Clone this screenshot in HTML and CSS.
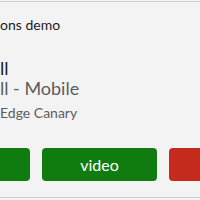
FILE: index.html
```html
<!DOCTYPE html>
<html>
<head>
<meta charset="utf-8">
<link rel="stylesheet" href="styles.css">
</head>
<body>
<div class="frame">
  <div class="title">ons demo</div>
  <div class="heading">ll</div>
  <div class="subheading">ll - Mobile</div>
  <div class="source">Edge Canary</div>
  <div class="actions">
    <button class="btn green"></button>
    <button class="btn green">video</button>
    <button class="btn red"></button>
  </div>
</div>
</body>
</html>
```
FILE: styles.css
```css
html, body {
  margin: 0;
  padding: 0;
  background: #f3f3f3;
  width: 200px;
  height: 200px;
  overflow: hidden;
  font-family: "Lato", "Open Sans", sans-serif;
}
.frame {
  margin-top: 1px;
  height: 195px;
  border-top: 1px solid #d2d2d2;
  border-bottom: 1px solid #cdcdcd;
  background: #f3f3f3;
  box-sizing: content-box;
  overflow: hidden;
}
.title {
  margin-top: 13px;
  font-size: 14px;
  line-height: 20px;
  color: #1b1b1b;
  white-space: nowrap;
}
.heading {
  margin-top: 23px;
  font-size: 18px;
  line-height: 20px;
  color: #1b1b1b;
  white-space: nowrap;
}
.subheading {
  font-size: 18px;
  line-height: 20px;
  color: #5d5d5d;
  white-space: nowrap;
}
.source {
  margin-top: 5px;
  font-size: 14px;
  line-height: 20px;
  color: #5d5d5d;
  white-space: nowrap;
}
.actions {
  display: flex;
  gap: 12px;
  margin-top: 25px;
  margin-left: -85px;
}
.btn {
  flex: 0 0 115px;
  width: 115px;
  height: 33px;
  border: none;
  border-radius: 4px;
  color: #ffffff;
  font-family: "Lato", "Open Sans", sans-serif;
  font-size: 16px;
  padding: 0;
}
.green { background: #107c10; }
.red { background: #c42b1c; }
```
